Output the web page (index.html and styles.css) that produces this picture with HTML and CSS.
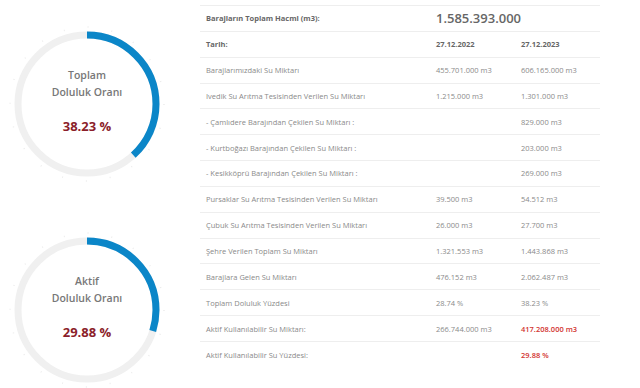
FILE: index.html
```html
<!DOCTYPE html>
<html lang="tr">
<head>
<meta charset="utf-8">
<link rel="stylesheet" href="styles.css">
</head>
<body>
<div class="page">
  <div class="gauges">
    <div class="gauge">
      <svg class="ring" width="160" height="160" viewBox="0 0 160 160">
        <circle cx="80" cy="80" r="77" class="ticks"/>
        <circle cx="80" cy="80" r="69" class="track"/>
        <circle cx="80" cy="80" r="69" class="bar" style="stroke-dasharray: 165.75 433.54"/>
      </svg>
      <div class="gtext">
        <div class="glabel">Toplam</div>
        <div class="glabel">Doluluk Oranı</div>
        <div class="gval">38.23 %</div>
      </div>
    </div>
    <div class="gauge">
      <svg class="ring" width="160" height="160" viewBox="0 0 160 160">
        <circle cx="80" cy="80" r="77" class="ticks"/>
        <circle cx="80" cy="80" r="69" class="track"/>
        <circle cx="80" cy="80" r="69" class="bar" style="stroke-dasharray: 129.54 433.54"/>
      </svg>
      <div class="gtext">
        <div class="glabel">Aktif</div>
        <div class="glabel">Doluluk Oranı</div>
        <div class="gval">29.88 %</div>
      </div>
    </div>
  </div>
  <div class="table">
    <div class="row head"><div class="c1 b">Barajların Toplam Hacmi (m3):</div><div class="big">1.585.393.000</div></div>
    <div class="row"><div class="c1 b">Tarih:</div><div class="b">27.12.2022</div><div class="b">27.12.2023</div></div>
    <div class="row"><div class="c1">Barajlarımızdaki Su Miktarı</div><div>455.701.000 m3</div><div>606.165.000 m3</div></div>
    <div class="row"><div class="c1">Ivedik Su Arıtma Tesisinden Verilen Su Miktarı</div><div>1.215.000 m3</div><div>1.301.000 m3</div></div>
    <div class="row"><div class="c1">- Çamlıdere Barajından Çekilen Su Miktarı :</div><div></div><div>829.000 m3</div></div>
    <div class="row"><div class="c1">- Kurtboğazı Barajından Çekilen Su Miktarı :</div><div></div><div>203.000 m3</div></div>
    <div class="row"><div class="c1">- Kesikköprü Barajından Çekilen Su Miktarı :</div><div></div><div>269.000 m3</div></div>
    <div class="row"><div class="c1">Pursaklar Su Arıtma Tesisinden Verilen Su Miktarı</div><div>39.500 m3</div><div>54.512 m3</div></div>
    <div class="row"><div class="c1">Çubuk Su Arıtma Tesisinden Verilen Su Miktarı</div><div>26.000 m3</div><div>27.700 m3</div></div>
    <div class="row"><div class="c1">Şehre Verilen Toplam Su Miktarı</div><div>1.321.553 m3</div><div>1.443.868 m3</div></div>
    <div class="row"><div class="c1">Barajlara Gelen Su Miktarı</div><div>476.152 m3</div><div>2.062.487 m3</div></div>
    <div class="row"><div class="c1">Toplam Doluluk Yüzdesi</div><div>28.74 %</div><div>38.23 %</div></div>
    <div class="row"><div class="c1">Aktif Kullanılabilir Su Miktarı:</div><div>266.744.000 m3</div><div class="red">417.208.000 m3</div></div>
    <div class="row last"><div class="c1">Aktif Kullanılabilir Su Yüzdesi:</div><div></div><div class="red">29.88 %</div></div>
  </div>
</div>
</body>
</html>
```

FILE: styles.css
```css
* { box-sizing: border-box; }
html, body { margin: 0; padding: 0; background: #fff; }
body { font-family: "Open Sans", "Liberation Sans", sans-serif; color: #888; }
.page { display: flex; width: 640px; height: 388px; overflow: hidden; }
.gauges { width: 200px; padding: 24px 0 0 7px; display: flex; flex-direction: column; gap: 46px; }
.gauge { display: grid; width: 160px; height: 160px; }
.gauge > * { grid-area: 1 / 1; }
.ring { display: block; }
.ring circle { fill: none; }
.ticks { stroke: #ececec; stroke-width: 1.5; stroke-dasharray: 1 23.19; }
.track { stroke: #f0f0f0; stroke-width: 7; }
.bar { stroke: #0b86c8; stroke-width: 7; transform: rotate(-90deg); transform-origin: 80px 80px; }
.gtext { display: flex; flex-direction: column; align-items: center; justify-content: center; padding-bottom: 6px; }
.glabel { font-size: 10.5px; font-weight: 600; color: #777; line-height: 17px; }
.gval { font-size: 13px; font-weight: 700; color: #8b1e2a; line-height: 20px; margin-top: 15px; }
.table { width: 400px; margin-top: 5px; border-top: 1px solid #eee; align-self: flex-start; }
.row { display: grid; grid-template-columns: 230px 85px 85px; height: 25.85px; align-items: center; border-bottom: 1px solid #eee; font-size: 7.5px; color: #8a8a8a; }
.row.last { border-bottom: none; }
.row > div { padding-left: 6px; white-space: nowrap; }
.b { font-weight: 700; color: #666; }
.big { font-size: 13px; font-weight: 600; color: #666; grid-column: 2 / 4; }
.red { color: #d2332f; font-weight: 600; }
```
